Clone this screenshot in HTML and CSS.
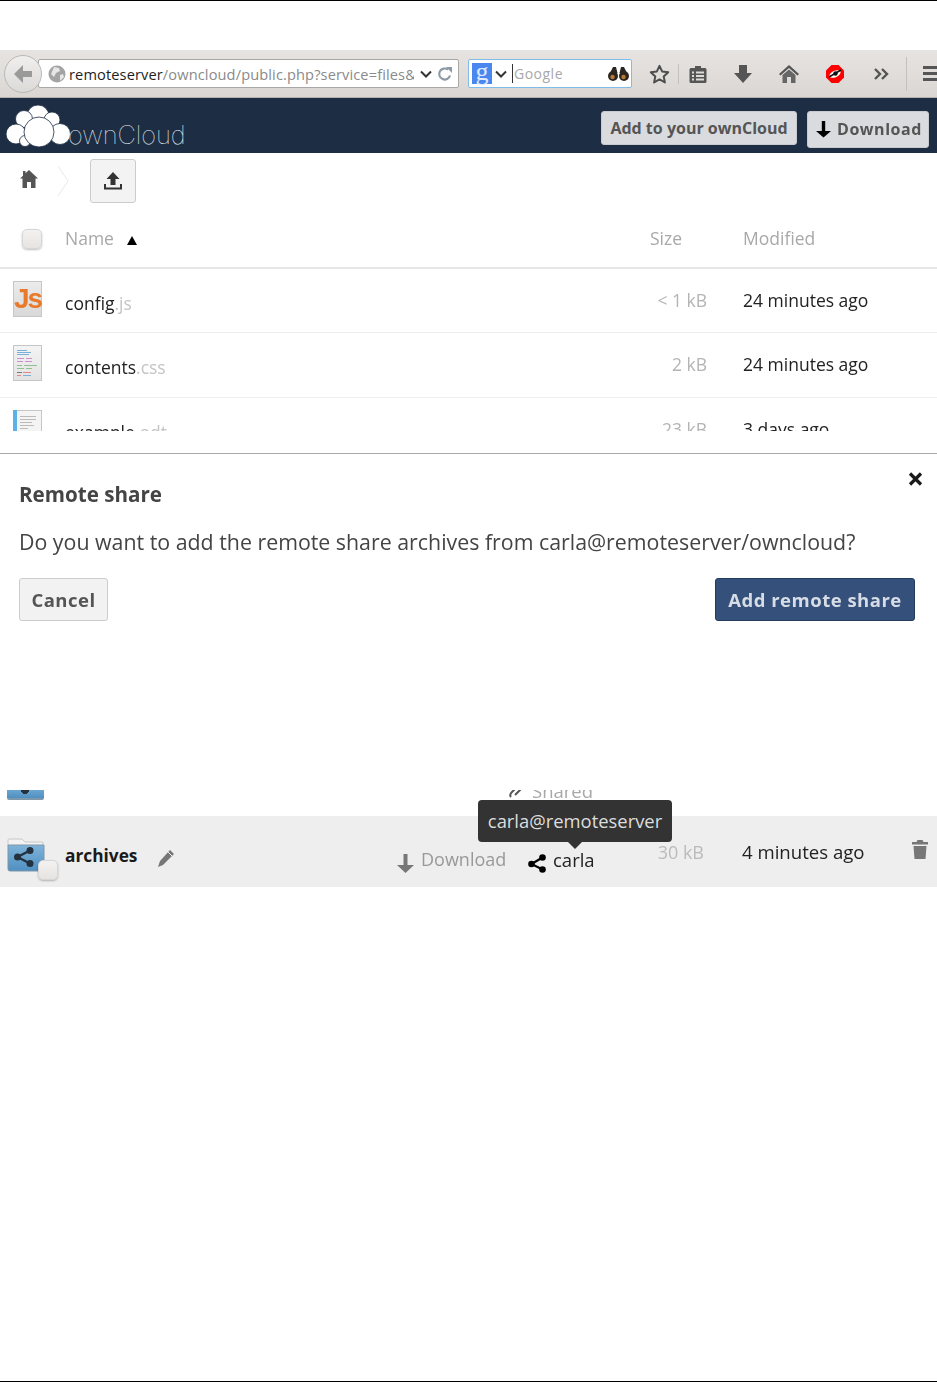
FILE: index.html
```html
<!DOCTYPE html>
<html lang="en">
<head>
<meta charset="utf-8">
<title>ownCloud remote share</title>
<link rel="stylesheet" href="styles.css">
</head>
<body>
<div class="page">
  <div class="toolbar">
    <div class="back"><svg width="20" height="20" viewBox="0 0 20 20"><path d="M10 1 1 10l9 9v-6h9V7h-9z" fill="#9a9a98"/></svg></div>
    <div class="urlbar">
      <svg class="globe" width="18" height="18" viewBox="0 0 18 18"><circle cx="9" cy="9" r="8.5" fill="#a3a3a3"/><path d="M6 2l5 1 1 3-4 2-2 4-3-3zM12 10l3-1 1 3-4 4z" fill="#e6e6e6"/></svg>
      <span class="url"><b>remoteserver</b>/owncloud/public.php?service=files&amp;t</span>
      <svg class="chev" width="12" height="8" viewBox="0 0 12 8"><path d="M1 1.5l5 5 5-5" fill="none" stroke="#333" stroke-width="2"/></svg>
      <svg class="reload" width="16" height="16" viewBox="0 0 16 16"><path d="M13 9.5A5.5 5.5 0 1 1 11 3.6" fill="none" stroke="#8b9aa6" stroke-width="2.2"/><path d="M9 1h6v6z" fill="#8b9aa6"/></svg>
    </div>
    <div class="search">
      <span class="gbox">g</span>
      <svg width="12" height="8" viewBox="0 0 12 8"><path d="M1 1.5l5 5 5-5" fill="none" stroke="#333" stroke-width="2"/></svg>
      <span class="gtext">Google</span>
      <svg class="bino" width="21" height="16" viewBox="0 0 21 16"><circle cx="5" cy="10" r="5" fill="#2c2620"/><circle cx="16" cy="10" r="5" fill="#2c2620"/><path d="M2 7l3-6h3l1.500 6h2L13 1h3l3 6z" fill="#2c2620"/><circle cx="4.500" cy="11" r="2.200" fill="#b5793a"/><circle cx="15.500" cy="11" r="2.200" fill="#b5793a"/></svg>
    </div>
    <div class="tool star"><svg width="21" height="20" viewBox="0 0 21 20"><path d="M10.5 1.8l2.6 5.6 6.100.8-4.500 4.200 1.200 6-5.400-3-5.400 3 1.200-6L1.800 8.200l6.100-.8z" fill="none" stroke="#4e4e4e" stroke-width="2" stroke-linejoin="round"/></svg></div>
    <div class="sep"></div>
    <div class="tool clip"><svg width="18" height="18" viewBox="0 0 18 18"><path d="M2 3h4V1h6v2h4a1.500 1.500 0 0 1 1.500 1.500v12A1.500 1.500 0 0 1 16 18H2a1.500 1.500 0 0 1-1.500-1.500v-12A1.500 1.500 0 0 1 2 3z" fill="#555"/><path d="M3 6.500h2v2H3zM7 6.500h8v2H7zM3 10h2v2H3zM7 10h8v2H7zM3 13.500h2v2H3zM7 13.500h8v2H7z" fill="#dedbd8"/></svg></div>
    <div class="tool"><svg width="18" height="18" viewBox="0 0 18 18"><path d="M5 0h8v8h5l-9 10L0 8h5z" fill="#555"/></svg></div>
    <div class="tool"><svg width="20" height="18" viewBox="0 0 20 18"><path d="M10 0l10 9-1.500 1.500L10 3 1.500 10.500 0 9z" fill="#555"/><path d="M3.500 10L10 4.500l6.500 5.500v8H12v-6H8v6H3.500z" fill="#666"/></svg></div>
    <div class="tool"><svg width="18" height="18" viewBox="0 0 18 18"><path d="M5.500 0h7L18 5.500v7L12.500 18h-7L0 12.500v-7z" fill="#f00"/><ellipse cx="9" cy="9" rx="6" ry="3.200" fill="#fff" transform="rotate(-25 9 9)"/><circle cx="9.500" cy="8.500" r="2.200" fill="#111"/><path d="M3 12l12-7" stroke="#111" stroke-width="1.500"/></svg></div>
    <div class="tool more"><svg width="15" height="12" viewBox="0 0 15 12"><path d="M1 1l5 5-5 5M8 1l5 5-5 5" fill="none" stroke="#555" stroke-width="2.400"/></svg></div>
    <div class="sep tall"></div>
    <div class="burger"><span></span><span></span><span></span></div>
  </div>

  <header class="brand">
    <div class="logo">
      <svg width="66" height="44" viewBox="0 0 66 44"><g fill="#fff" stroke="#1d2d44" stroke-width="0.8"><circle cx="32" cy="11" r="11"/><circle cx="46" cy="15" r="8"/><circle cx="18" cy="14" r="8.500"/><circle cx="54" cy="29" r="10.500"/><circle cx="10" cy="29" r="10"/><circle cx="19" cy="36" r="5.500"/><circle cx="33" cy="27" r="15"/></g></svg>
      <span class="wordmark">ownCloud</span>
    </div>
    <div class="brand-actions">
      <button class="hbtn add">Add to your ownCloud</button>
      <button class="hbtn dl"><svg width="17" height="18" viewBox="0 0 17 18"><path d="M6.800 1h3.400v10H16l-7.500 6.500L1 11h5.800z" fill="#000"/></svg>Download</button>
    </div>
  </header>

  <div class="crumbs">
    <svg class="crumb-home" width="18" height="18" viewBox="0 0 18 18"><path d="M9 0l9 8.500h-2.500V18H11v-6H7v6H2.500V8.500H0L3 5.700V1h2.500v2.300z" fill="#555"/></svg>
    <svg class="crumb-chev" width="12" height="32" viewBox="0 0 12 32"><path d="M1 1l10 15L1 31" fill="none" stroke="#e8e8e8" stroke-width="1"/></svg>
    <button class="upload"><svg width="20" height="20" viewBox="0 0 20 20"><path d="M10 1l6.500 7H12.500v6h-5V8H3.500z" fill="#333"/><path d="M1 13v5.500h18V13h-2v3.500H3V13z" fill="#333"/></svg></button>
  </div>

  <div class="thead">
    <div class="col-icon"><span class="check"></span></div>
    <div class="col-name th">Name <span class="sort"></span></div>
    <div class="th th-size">Size</div>
    <div class="th th-mod">Modified</div>
  </div>

  <div class="frow">
    <div class="col-icon"><div class="ficon js">Js</div></div>
    <div class="col-name fname">config<span class="ext">.js</span></div>
    <div class="fsize">&lt; 1 kB</div>
    <div class="fmod">24 minutes ago</div>
  </div>
  <div class="frow second">
    <div class="col-icon">
      <div class="ficon">
        <svg width="29" height="36" viewBox="0 0 29 36"><g stroke-width="1"><path d="M4 5.500h10M4 7.500h14M4 9.500h12" stroke="#7ab0d8"/><path d="M4 13.500h7M13 13.500h6M4 16.500h6M12 16.500h7" stroke="#cf8fcf"/><path d="M4 20.500h5M11 20.500h13M4 23.500h7M13 23.500h6" stroke="#90c090"/><path d="M4 27.500h5" stroke="#777"/><path d="M10 27.500h8M4 30.500h4" stroke="#e08888"/><path d="M10 30.500h8" stroke="#7ab0d8"/></g></svg>
      </div>
    </div>
    <div class="col-name fname">contents<span class="ext">.css</span></div>
    <div class="fsize">2 kB</div>
    <div class="fmod">24 minutes ago</div>
  </div>
  <div class="frow clipped">
    <div class="col-icon">
      <div class="ficon odt"><svg width="29" height="36" viewBox="0 0 29 36"><path d="M0 0h4v36H0z" fill="#5db0e8"/><path d="M7 6.500h16M7 9.500h16M7 12.500h12M7 15.500h14M7 18.500h8" stroke="#bbb" stroke-width="1"/></svg></div>
    </div>
    <div class="col-name fname">example<span class="ext">.odt</span></div>
    <div class="fsize">23 kB</div>
    <div class="fmod">3 days ago</div>
  </div>

  <div class="behind">
    <span class="behind-icon"></span><span class="behind-name"></span><span class="behind-date"></span>
  </div>

  <section class="dialog">
    <button class="close" aria-label="Close"><svg width="15" height="14" viewBox="0 0 15 14"><path d="M2 1.500l11 11M13 1.500l-11 11" stroke="#1a1a1a" stroke-width="3.200"/></svg></button>
    <h2 class="dtitle">Remote share</h2>
    <p class="dtext">Do you want to add the remote share archives from carla@remoteserver/owncloud?</p>
    <div class="dactions">
      <button class="btn cancel">Cancel</button>
      <button class="btn primary">Add remote share</button>
    </div>
  </section>

  <div class="peek">
    <span class="peek-folder"></span>
    <span class="peek-shared"><svg width="14" height="16" viewBox="0 0 14 16"><path d="M2 13c-2-2 0-4 1-5l5-5c3-2 5 1 3 3l-5 5" fill="none" stroke="#555" stroke-width="2"/></svg><span>Shared</span></span>
  </div>

  <div class="arow">
    <div class="col-icon">
      <div class="afolder">
        <svg width="38" height="34" viewBox="0 0 38 34"><defs><linearGradient id="fold" x1="0" y1="0" x2="0" y2="1"><stop offset="0" stop-color="#7fb3da"/><stop offset="1" stop-color="#4f8fc0"/></linearGradient></defs><path d="M1 4V2a1 1 0 0 1 1-1h13l3 3h17a1 1 0 0 1 1 1v3H1z" fill="#f2f2f2" stroke="#c8c8c8"/><path d="M1 7h36v24a2 2 0 0 1-2 2H3a2 2 0 0 1-2-2z" fill="url(#fold)" stroke="#7f97aa"/><g fill="#24323f"><circle cx="10.500" cy="19" r="3.500"/><circle cx="23" cy="12.500" r="3.500"/><circle cx="23" cy="25.500" r="3.500"/></g><path d="M23 12.500L10.500 19 23 25.500" fill="none" stroke="#24323f" stroke-width="2.400"/></svg>
        <span class="check overlay"></span>
      </div>
    </div>
    <div class="aname"><b>archives</b><svg class="pencil" width="18" height="19" viewBox="0 0 18 19"><path d="M13 1l4 4L6 16l-5 2 2-6z" fill="#777"/><path d="M11 3l4 4" stroke="#eee" stroke-width="1"/></svg></div>
    <div class="adl"><svg width="17" height="19" viewBox="0 0 17 19"><path d="M6.500 0h4v11H17l-8.500 8L0 11h6.500z" fill="#777"/></svg><span>Download</span></div>
    <div class="ashare"><svg width="18" height="19" viewBox="0 0 18 19"><g fill="#000"><circle cx="3.500" cy="10" r="3.300"/><circle cx="14.500" cy="3.500" r="3.300"/><circle cx="14.500" cy="15.500" r="3.300"/></g><path d="M14.500 3.500L3.500 10l11 5.500" fill="none" stroke="#000" stroke-width="2.200"/></svg><span>carla</span></div>
    <div class="asize">30 kB</div>
    <div class="amod">4 minutes ago</div>
    <svg class="trash" width="16" height="19" viewBox="0 0 16 19"><path d="M5.500 0h5l1 2H16v2.500H0V2h4.500zM1.500 6h13l-1 13h-11z" fill="#777"/></svg>
    <div class="tooltip">carla@remoteserver</div>
  </div>
</div>
</body>
</html>
```

FILE: styles.css
```css
* { box-sizing: border-box; }
html, body { margin: 0; padding: 0; background: #fff; }
body { font-family: "Open Sans", "Liberation Sans", sans-serif; color: #222; }
button { font-family: inherit; cursor: pointer; }

.page {
  width: 937px;
  height: 1382px;
  border-top: 1px solid #000;
  border-bottom: 1px solid #000;
  display: flex;
  flex-direction: column;
  overflow: hidden;
  filter: blur(0.5px);
}

/* browser chrome */
.toolbar {
  margin-top: 49px;
  height: 48px;
  flex: none;
  display: flex;
  align-items: center;
  background: linear-gradient(#e6e3e1, #dad7d3);
  border-bottom: 1px solid #b5b2ae;
  padding-left: 4px;
}
.back {
  width: 38px;
  height: 38px;
  border-radius: 50%;
  background: linear-gradient(#f1efee, #dcdad7);
  border: 1px solid #b9b9b7;
  display: flex;
  align-items: center;
  justify-content: center;
  position: relative;
  z-index: 1;
  flex: none;
}
.urlbar {
  width: 421px;
  height: 29px;
  margin-left: -4px;
  background: #fff;
  border: 1px solid #aaa8a4;
  border-radius: 2px;
  display: flex;
  align-items: center;
  padding-left: 9px;
  flex: none;
}
.globe { flex: none; }
.url {
  width: 345px;
  margin-left: 3px;
  font-size: 14.6px;
  letter-spacing: 0.12px;
  color: #8a8a8a;
  white-space: nowrap;
  overflow: hidden;
  flex: none;
}
.url b { font-weight: 400; color: #1e1e1e; }
.chev { margin-left: 6px; flex: none; }
.reload { margin-left: 5px; flex: none; }
.search {
  width: 164px;
  height: 29px;
  margin-left: 9px;
  background: #fff;
  border: 1px solid #7fbce8;
  border-radius: 2px;
  display: flex;
  align-items: center;
  padding-left: 3px;
  flex: none;
}
.gbox {
  width: 20px;
  height: 21px;
  background: #4a86f0;
  color: #dfe9ff;
  font: 400 26px/17px "Liberation Serif", serif;
  text-align: center;
  flex: none;
  margin-right: 3px;
}
.gtext {
  margin-left: 5px;
  padding-left: 1px;
  border-left: 1px solid #333;
  font-size: 14px;
  line-height: 19px;
  letter-spacing: 0.5px;
  color: #a8a8a8;
  flex: 1;
}
.bino { margin-right: 2px; flex: none; }
.tool { width: 46px; display: flex; align-items: center; justify-content: center; flex: none; }
.star { width: 37px; margin-left: 9px; }
.clip { width: 37px; margin-right: 4px; }
.sep { width: 1px; height: 20px; background: #c4c1bd; flex: none; }
.sep.tall { height: 34px; margin-left: 2px; }
.burger { margin-left: 16px; display: flex; flex-direction: column; gap: 3px; flex: none; }
.burger span { display: block; width: 16px; height: 3px; background: #555; }

/* ownCloud header */
.brand {
  height: 55px;
  flex: none;
  background: #1d2d44;
  display: flex;
  align-items: flex-start;
  justify-content: space-between;
  padding: 7px 8px 0 6px;
}
.logo { display: flex; align-items: flex-end; height: 44px; }
.wordmark {
  margin: 0 0 -3px -4px;
  font-family: Inter, sans-serif;
  font-weight: 100;
  font-size: 25.5px;
  line-height: 34px;
  letter-spacing: -0.1px;
  color: #e8edf2;
}
.brand-actions { display: flex; gap: 10px; margin-top: 6px; align-items: flex-start; }
.hbtn {
  height: 34px;
  border: 1px solid #c8cace;
  border-radius: 3px;
  background: #d9dbdf;
  color: #555;
  font-size: 16px;
  font-weight: 700;
  letter-spacing: 0.55px;
  padding: 0;
}
.add { width: 196px; letter-spacing: 0; }
.dl {
  width: 122px;
  height: 37px;
  display: flex;
  align-items: center;
  padding: 0 0 2px 7px;
  gap: 5px;
}

/* breadcrumb */
.crumbs {
  height: 57px;
  flex: none;
  display: flex;
  align-items: flex-start;
  padding: 6px 0 0 20px;
}
.crumb-home { margin-top: 11px; }
.crumb-chev { margin: 6px 0 0 19px; }
.upload {
  width: 46px;
  height: 44px;
  margin-left: 21px;
  background: #f3f3f3;
  border: 1px solid #ccc;
  border-radius: 3px;
  display: flex;
  align-items: center;
  justify-content: center;
  padding: 0;
}

/* file table */
.thead {
  height: 59px;
  flex: none;
  display: flex;
  align-items: center;
  border-bottom: 2px solid #e6e6e6;
  padding-bottom: 2px;
}
.col-icon { width: 65px; flex: none; padding-left: 13px; }
.col-name { flex: 1; min-width: 0; }
.check {
  display: block;
  width: 20px;
  height: 20px;
  border: 1px solid #d6d6d6;
  border-radius: 5px;
  background: linear-gradient(#f3f2f1, #e6e4e2);
  box-shadow: 0 1px 2px rgba(0, 0, 0, 0.25);
}
.thead .check { margin: 2px 0 0 9px; }
.th { font-size: 17.5px; color: #a8a8a8; }
.sort {
  display: inline-block;
  margin-left: 9px;
  border-left: 5px solid transparent;
  border-right: 5px solid transparent;
  border-bottom: 9px solid #000;
}
.th-size { width: 93px; flex: none; }
.th-mod { width: 194px; flex: none; }

.frow {
  height: 64px;
  flex: none;
  display: flex;
  align-items: flex-start;
  border-bottom: 1px solid #eee;
  padding-top: 12px;
}
.frow.second { height: 65px; }
.frow.clipped { height: 33px; border-bottom: 0; overflow: hidden; }
.ficon {
  width: 29px;
  height: 36px;
  background: linear-gradient(#f4f4f4, #e2e2e2);
  box-shadow: inset 0 0 0 1px #c6c6c6;
  overflow: hidden;
}
.ficon.js {
  background: linear-gradient(#ececec, #d8d8d8);
  color: #e97a2c;
  font-family: "Liberation Sans", sans-serif;
  font-weight: 700;
  font-size: 28px;
  line-height: 36px;
  text-align: center;
  letter-spacing: -2px;
}
.ficon.odt { background: #f4f4f4; }
.fname { font-size: 17.5px; line-height: 24px; margin-top: 10px; color: #222; }
.ext { color: #c4c4c4; }
.fsize { width: 100px; flex: none; margin-top: 7px; text-align: right; font-size: 17.5px; line-height: 24px; color: #b4b4b4; }
.fmod { width: 194px; flex: none; margin: 7px 0 0 36px; font-size: 17.5px; line-height: 24px; color: #222; }

/* row peeking out from under the dialog */
.behind {
  margin-top: 22px;
  height: 1px;
  flex: none;
  background: #b0b0b0;
  display: flex;
  gap: 20px;
  padding-left: 172px;
  overflow: hidden;
}
.behind-icon { width: 48px; height: 1px; background: #9eb6c8; }
.behind-name { width: 142px; height: 1px; background: #555; }
.behind-date { margin-left: 430px; width: 60px; height: 1px; background: #888; }

/* dialog */
.dialog {
  position: relative;
  height: 337px;
  flex: none;
  padding: 27px 22px 0 19px;
  border-top: 1px solid #a8a8a8;
  margin-top: -1px;
}
.close {
  position: absolute;
  top: 18px;
  right: 14px;
  padding: 0;
  border: 0;
  background: none;
  line-height: 0;
}
.dtitle { margin: 0; font-size: 20.6px; line-height: 26px; font-weight: 700; color: #444; }
.dtext { margin: 21px 0 0; font-size: 21.35px; line-height: 28px; color: #444; white-space: nowrap; }
.dactions { display: flex; justify-content: space-between; margin-top: 22px; }
.btn {
  height: 43px;
  padding: 0;
  border: 1px solid #ccc;
  border-radius: 3px;
  background: #f2f2f2;
  color: #555;
  font-size: 18.5px;
  font-weight: 700;
  letter-spacing: 0.5px;
  white-space: nowrap;
}
.cancel { width: 89px; }
.primary {
  width: 200px;
  background: #35507a;
  border-color: #223a5c;
  color: #d7dde6;
}

.peek {
  height: 10px;
  flex: none;
  overflow: hidden;
  display: flex;
  align-items: flex-end;
}
.peek-folder {
  margin-left: 7px;
  width: 37px;
  height: 10px;
  background: radial-gradient(circle 4px at 18px 0, #24323f 95%, transparent), linear-gradient(#6ba6d2, #4f8fc0);
  border-bottom: 2px solid #7f97aa;
  border-radius: 0 0 2px 2px;
}
.peek-shared {
  margin-left: 465px;
  display: flex;
  align-items: flex-end;
  gap: 9px;
  font-size: 18.5px;
  line-height: 20px;
  color: #a8a8a8;
  height: 10px;
}
.peek-shared span { margin-bottom: -1px; }

.arow {
  margin-top: 16px;
  height: 71px;
  flex: none;
  position: relative;
  background: #eee;
  display: flex;
  align-items: flex-start;
}
.arow .col-icon { padding-left: 7px; }
.afolder { position: relative; width: 38px; height: 34px; margin-top: 22px; }
.check.overlay { position: absolute; left: 31px; top: 22px; }
.aname { width: 332px; flex: none; margin-top: 26px; display: flex; align-items: flex-start; font-size: 17.3px; line-height: 27px; color: #1a1a1a; }
.pencil { margin: 7px 0 0 20px; }
.adl { width: 131px; flex: none; display: flex; gap: 7px; margin-top: 30px; font-size: 18px; line-height: 26px; color: #999; align-items: flex-start; }
.adl svg { margin-top: 8px; }
.ashare { width: 122px; flex: none; display: flex; gap: 7px; margin-top: 31px; font-size: 18.5px; line-height: 26px; color: #222; align-items: flex-start; }
.ashare svg { margin-top: 7px; }
.asize { width: 54px; flex: none; text-align: right; margin-top: 23px; font-size: 18px; line-height: 26px; color: #bbb; }
.amod { width: 170px; flex: none; margin: 23px 0 0 38px; font-size: 18.6px; line-height: 26px; color: #222; }
.trash { margin-top: 24px; flex: none; }
.tooltip {
  position: absolute;
  left: 478px;
  top: -16px;
  width: 194px;
  height: 42px;
  background: #333;
  border-radius: 4px;
  color: #ddd;
  font-size: 18.4px;
  line-height: 42px;
  text-align: center;
}
.tooltip::after {
  content: "";
  position: absolute;
  left: 90px;
  bottom: -7px;
  border-left: 7px solid transparent;
  border-right: 7px solid transparent;
  border-top: 7px solid #333;
}
```
